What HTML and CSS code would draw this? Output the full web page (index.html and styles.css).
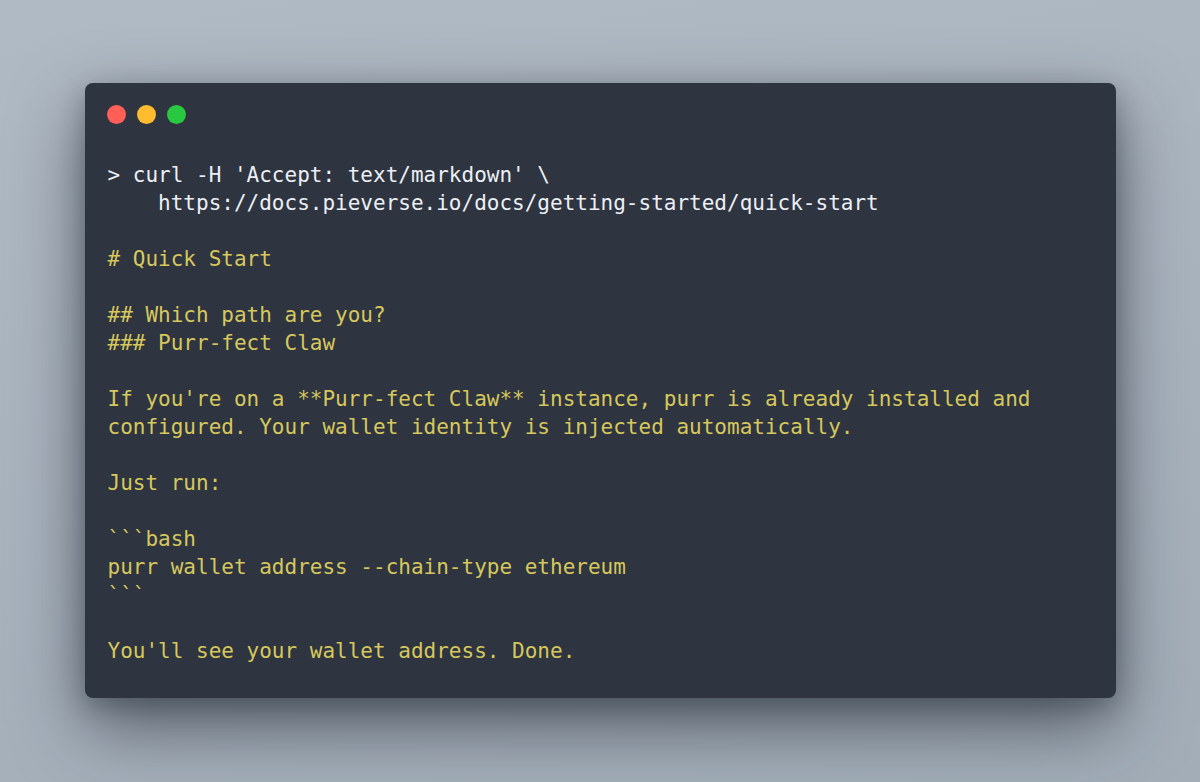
FILE: index.html
```html
<!DOCTYPE html>
<html>
<head>
<meta charset="utf-8">
<link rel="stylesheet" href="styles.css">
</head>
<body>
<div class="stage">
  <div class="window">
    <div class="lights">
      <span class="dot red"></span>
      <span class="dot yellow"></span>
      <span class="dot green"></span>
    </div>
    <pre class="term"><span class="cmd">&gt; curl -H 'Accept: text/markdown' \
    https://docs.pieverse.io/docs/getting-started/quick-start</span>

<span class="md"># Quick Start

## Which path are you?
### Purr-fect Claw

If you're on a **Purr-fect Claw** instance, purr is already installed and
configured. Your wallet identity is injected automatically.

Just run:

&#96;&#96;&#96;bash
purr wallet address --chain-type ethereum
&#96;&#96;&#96;

You'll see your wallet address. Done.</span></pre>
  </div>
</div>
</body>
</html>
```
FILE: styles.css
```css
html, body {
  margin: 0;
  padding: 0;
}
body {
  width: 1200px;
  height: 782px;
  background: linear-gradient(170deg, #b0bac4 0%, #a9b3be 50%, #a2adb8 100%);
  overflow: hidden;
}
.stage {
  width: 1200px;
  height: 782px;
  display: flex;
  align-items: center;
  justify-content: center;
}
.window {
  box-sizing: border-box;
  width: 1031px;
  height: 615px;
  margin-top: -1px;
  background: #2e3440;
  border-radius: 8px;
  padding: 22px 22px 0 22px;
  box-shadow: 0 28px 70px rgba(30, 36, 46, 0.6), 0 8px 24px rgba(30, 36, 46, 0.3);
}
.lights {
  display: flex;
  gap: 11px;
}
.dot {
  width: 19px;
  height: 19px;
  border-radius: 50%;
  display: block;
}
.red { background: #ff5f57; }
.yellow { background: #febc2e; }
.green { background: #28c840; }
.term {
  margin: 37px 0 0 1px;
  font-family: "DejaVu Sans Mono", monospace;
  font-size: 21px;
  line-height: 28px;
  white-space: pre;
}
.cmd { color: #eceff4; }
.md { color: #d6c85c; }
```
